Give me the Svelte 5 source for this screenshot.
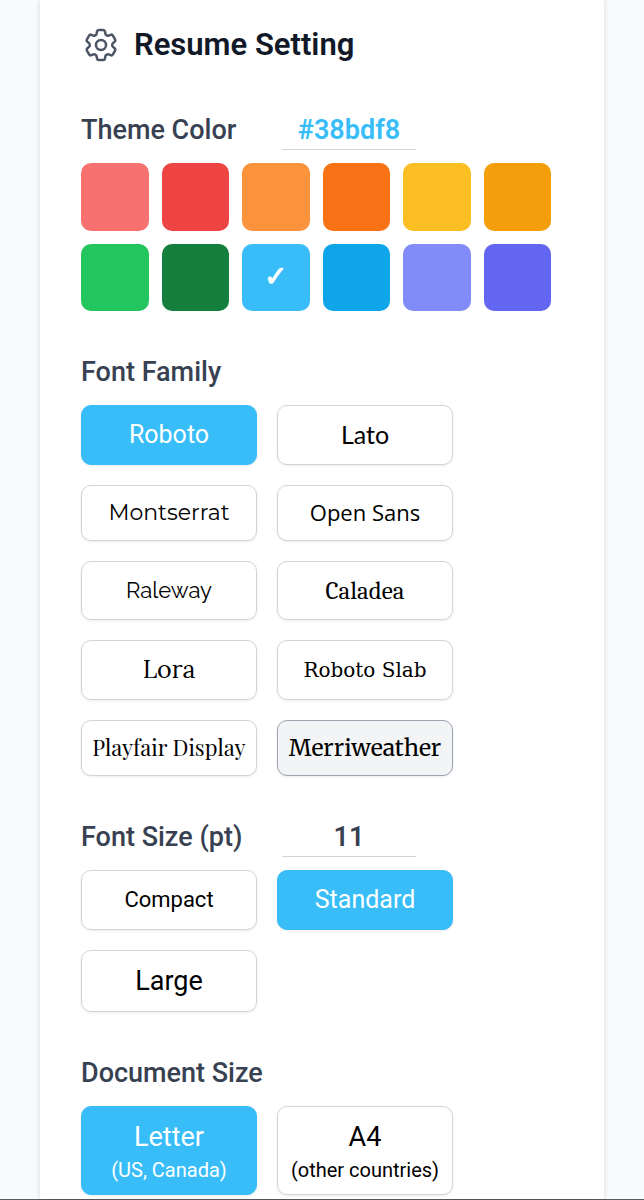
<script lang="ts">
  interface FontOption {
    name: string;
    stack: string;
    size: number;
  }

  interface SizeOption {
    label: string;
    pt: string;
    px: number;
  }

  const themeColors: string[] = [
    "#f87171", "#ef4444", "#fb923c", "#f97316", "#fbbf24", "#f59e0b",
    "#22c55e", "#15803d", "#38bdf8", "#0ea5e9", "#818cf8", "#6366f1"
  ];

  const fonts: FontOption[] = [
    { name: "Roboto", stack: "Roboto, sans-serif", size: 25 },
    { name: "Lato", stack: "Lato, sans-serif", size: 25 },
    { name: "Montserrat", stack: "Montserrat, Inter, sans-serif", size: 22 },
    { name: "Open Sans", stack: "'Open Sans', sans-serif", size: 22 },
    { name: "Raleway", stack: "Raleway, Lato, sans-serif", size: 22 },
    { name: "Caladea", stack: "Caladea, 'Liberation Serif', serif", size: 25 },
    { name: "Lora", stack: "Lora, 'Liberation Serif', serif", size: 25 },
    { name: "Roboto Slab", stack: "'Roboto Slab', 'DejaVu Serif', serif", size: 20 },
    { name: "Playfair Display", stack: "'Playfair Display', 'Liberation Serif', serif", size: 22 },
    { name: "Merriweather", stack: "Merriweather, 'DejaVu Serif', serif", size: 23 }
  ];

  const fontSizes: SizeOption[] = [
    { label: "Compact", pt: "10", px: 22 },
    { label: "Standard", pt: "11", px: 25 },
    { label: "Large", pt: "12", px: 27 }
  ];

  const documentSizes = [
    { name: "Letter", note: "(US, Canada)" },
    { name: "A4", note: "(other countries)" }
  ];

  let themeColor = $state("#38bdf8");
  let fontFamily = $state("Roboto");
  let fontSize = $state("11");
  let documentSize = $state("Letter");

  const selectedStyle = (selected: boolean): string =>
    selected ? `background-color: ${themeColor}; border-color: ${themeColor};` : "";
</script>

<main class="page">
  <div class="card">

    <header class="heading">
      <svg class="cog" viewBox="0 0 24 24" fill="none" stroke="currentColor" stroke-width="1.5" stroke-linecap="round" stroke-linejoin="round" aria-hidden="true">
        <path d="M9.594 3.94c.09-.542.56-.94 1.11-.94h2.593c.55 0 1.02.398 1.11.94l.213 1.281c.063.374.313.686.645.87.074.04.147.083.22.127.324.196.72.257 1.075.124l1.217-.456a1.125 1.125 0 011.37.49l1.296 2.247a1.125 1.125 0 01-.26 1.431l-1.003.827c-.293.24-.438.613-.431.992a6.759 6.759 0 010 .255c-.007.378.138.75.43.99l1.005.828c.424.35.534.954.26 1.43l-1.298 2.247a1.125 1.125 0 01-1.369.491l-1.217-.456c-.355-.133-.75-.072-1.076.124a6.57 6.57 0 01-.22.128c-.331.183-.581.495-.644.869l-.213 1.28c-.09.543-.56.941-1.11.941h-2.594c-.55 0-1.02-.398-1.11-.94l-.213-1.281c-.062-.374-.312-.686-.644-.87a6.52 6.52 0 01-.22-.127c-.325-.196-.72-.257-1.076-.124l-1.217.456a1.125 1.125 0 01-1.369-.49l-1.297-2.247a1.125 1.125 0 01.26-1.431l1.004-.827c.292-.24.437-.613.43-.992a6.932 6.932 0 010-.255c.007-.378-.138-.75-.43-.99l-1.004-.828a1.125 1.125 0 01-.26-1.43l1.297-2.247a1.125 1.125 0 011.37-.491l1.216.456c.356.133.751.072 1.076-.124.072-.044.146-.087.22-.128.332-.183.582-.495.644-.869l.214-1.281z" />
        <path d="M15 12a3 3 0 11-6 0 3 3 0 016 0z" />
      </svg>
      <h1>Resume Setting</h1>
    </header>

    <section>
      <div class="label-row">
        <label for="themeColor">Theme Color</label>
        <input id="themeColor" type="text" bind:value={themeColor} style="color: {themeColor}">
      </div>
      <div class="swatches">
        {#each themeColors as color}
          <button
            class="swatch"
            style="background-color: {color}"
            aria-label={color}
            aria-pressed={themeColor === color}
            onclick={() => themeColor = color}
          >{themeColor === color ? "✓" : ""}</button>
        {/each}
      </div>
    </section>

    <section>
      <h2 class="label-row">Font Family</h2>
      <div class="options">
        {#each fonts as font}
          <button
            class="option"
            class:selected={fontFamily === font.name}
            class:hovered={font.name === "Merriweather"}
            style="font-family: {font.stack}; font-size: {font.size}px; {selectedStyle(fontFamily === font.name)}"
            onclick={() => fontFamily = font.name}
          >{font.name}</button>
        {/each}
      </div>
    </section>

    <section>
      <div class="label-row">
        <label for="fontSize">Font Size (pt)</label>
        <input id="fontSize" type="text" bind:value={fontSize}>
      </div>
      <div class="options">
        {#each fontSizes as size}
          <button
            class="option"
            class:selected={fontSize === size.pt}
            style="font-size: {size.px}px; {selectedStyle(fontSize === size.pt)}"
            onclick={() => fontSize = size.pt}
          >{size.label}</button>
        {/each}
      </div>
    </section>

    <section>
      <h2 class="label-row">Document Size</h2>
      <div class="options">
        {#each documentSizes as doc}
          <button
            class="option document"
            class:selected={documentSize === doc.name}
            style={selectedStyle(documentSize === doc.name)}
            onclick={() => documentSize = doc.name}
          >
            <span>{doc.name}</span>
            <span class="note">{doc.note}</span>
          </button>
        {/each}
      </div>
    </section>

  </div>
</main>

<style>
  :global(body) {
    margin: 0;
    background-color: #f9fafb;
  }

  .page {
    box-sizing: border-box;
    min-height: 100vh;
    padding: 0 40px;
    display: flex;
    border-bottom: 1px solid #5b5a5f;
    font-family: Roboto, sans-serif;
    color: #374151;
  }

  .card {
    flex: 1;
    min-width: 0;
    padding: 25px 40px 3px 41px;
    display: flex;
    flex-direction: column;
    gap: 39px;
    background-color: white;
    box-shadow: 0 0 5px rgba(0, 0, 0, .14);
  }

  .heading {
    display: flex;
    align-items: center;
    gap: 13px;
    margin-bottom: 4px;
  }

  .cog {
    width: 40px;
    height: 40px;
    flex: none;
    color: #4b5563;
  }

  h1 {
    margin: 0;
    font-size: 31px;
    line-height: 40px;
    font-weight: 600;
    color: #111827;
  }

  .label-row {
    box-sizing: border-box;
    height: 42px;
    margin: 0 0 13px;
    display: flex;
    font-size: 27px;
    line-height: 44px;
    font-weight: 500;
  }

  .label-row label {
    width: 201px;
  }

  .label-row input {
    box-sizing: border-box;
    width: 134px;
    height: 42px;
    padding: 3px 0 0;
    border: none;
    border-bottom: 1px solid #d1d5db;
    background: none;
    font: inherit;
    font-weight: 600;
    line-height: 32px;
    color: inherit;
    text-align: center;
    outline: none;
  }

  .swatches {
    max-width: 470px;
    display: grid;
    grid-template-columns: repeat(6, 1fr);
    gap: 13px;
  }

  .swatch {
    aspect-ratio: 1;
    padding: 0;
    border: none;
    border-radius: 10px;
    color: white;
    font-family: "DejaVu Sans", sans-serif;
    font-size: 28px;
    line-height: 1;
    -webkit-text-stroke: 1px white;
    cursor: pointer;
  }

  .options {
    max-width: 372px;
    display: grid;
    grid-template-columns: repeat(2, 1fr);
    gap: 20px;
  }

  .option {
    box-sizing: border-box;
    min-height: 56px;
    padding: 10px 0;
    border: 1px solid #d1d5db;
    border-radius: 10px;
    background-color: white;
    box-shadow: 0 1px 3px rgba(0, 0, 0, .08);
    color: black;
    font-family: inherit;
    line-height: 1.5;
    white-space: nowrap;
    cursor: pointer;
  }

  .option.hovered {
    border-color: #9ca3af;
    background-color: #f3f4f6;
  }

  .option.selected {
    color: white;
  }

  .document {
    display: flex;
    flex-direction: column;
    align-items: center;
    font-size: 27px;
    line-height: 40px;
  }

  .note {
    font-size: 20px;
    line-height: 27px;
  }
</style>
